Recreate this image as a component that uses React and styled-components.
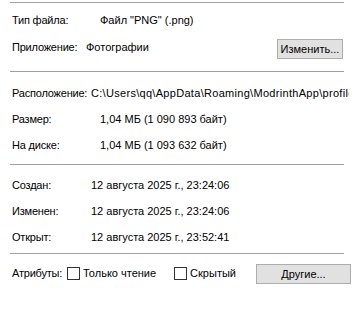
import React from 'react';
import styled, { createGlobalStyle } from 'styled-components';

const GlobalStyle = createGlobalStyle`
  body {
    margin: 0;
    background: #ffffff;
  }
`;

function App() {
  return (
    <>
      <GlobalStyle />
      <Page>
        <Separator />
        <Section $top={4} $bottom={10}>
          <Row>
            <Label $w={88}>Тип файла:</Label>
            <Value>Файл "PNG" (.png)</Value>
          </Row>
          <Row $h={28}>
            <Label $w={74}>Приложение:</Label>
            <Value>Фотографии</Value>
            <Button $w={66} $right={9}>Изменить...</Button>
          </Row>
        </Section>
        <Separator />
        <Section $top={8} $bottom={6}>
          <Row>
            <Label $w={79}>Расположение:</Label>
            <Value $spread>C:\Users\qq\AppData\Roaming\ModrinthApp\profiles</Value>
          </Row>
          <Row>
            <Label $w={88}>Размер:</Label>
            <Value>1,04 МБ (1 090 893 байт)</Value>
          </Row>
          <Row>
            <Label $w={88}>На диске:</Label>
            <Value>1,04 МБ (1 093 632 байт)</Value>
          </Row>
        </Section>
        <Separator />
        <Section $top={7} $bottom={3}>
          <Row>
            <Label $w={79}>Создан:</Label>
            <Value>12 августа 2025 г., 23:24:06</Value>
          </Row>
          <Row>
            <Label $w={79}>Изменен:</Label>
            <Value>12 августа 2025 г., 23:24:06</Value>
          </Row>
          <Row>
            <Label $w={79}>Открыт:</Label>
            <Value>12 августа 2025 г., 23:52:41</Value>
          </Row>
        </Section>
        <Separator />
        <Section $top={6} $bottom={0}>
          <Row>
            <Label $w={55}>Атрибуты:</Label>
            <Check>
              <Box />
              Только чтение
            </Check>
            <Check $gap={18}>
              <Box />
              Скрытый
            </Check>
            <Button $w={95} $left={20} $top={2}>Другие...</Button>
          </Row>
        </Section>
      </Page>
    </>
  );
}

// ========== Styled Components ==========

const Page = styled.div`
  width: 352px;
  height: 328px;
  overflow: hidden;
  box-sizing: border-box;
  padding-top: 2px;
  font-family: 'Liberation Sans', Arial, sans-serif;
  font-size: 11px;
  color: #000;
`;

const Separator = styled.div`
  height: 1px;
  margin: 0 8px 0 10px;
  background: #a0a0a0;
`;

const Section = styled.div`
  padding: ${(p) => p.$top}px 0 ${(p) => p.$bottom}px 12px;
`;

const Row = styled.div`
  display: flex;
  align-items: center;
  height: ${(p) => p.$h || 26}px;
  white-space: nowrap;
`;

const Label = styled.span`
  flex: none;
  width: ${(p) => p.$w}px;
  letter-spacing: -0.2px;
`;

const Value = styled.span`
  flex: 1;
  min-width: 0;
  overflow: hidden;
  margin-right: 3px;
  letter-spacing: ${(p) => (p.$spread ? '0.3px' : '0')};
`;

const Button = styled.button`
  flex: none;
  width: ${(p) => p.$w}px;
  height: 20px;
  margin: ${(p) => (p.$top === undefined ? 4 : p.$top)}px ${(p) => p.$right || 2}px 0
    ${(p) => p.$left || 0}px;
  padding: 0;
  background: #e1e1e1;
  border: 1px solid #adadad;
  border-radius: 0;
  font-family: inherit;
  font-size: 11px;
  color: #000;
`;

const Check = styled.label`
  display: flex;
  align-items: center;
  gap: 3px;
  margin-left: ${(p) => p.$gap || 0}px;
`;

const Box = styled.span`
  width: 11px;
  height: 11px;
  border: 1px solid #333;
  background: #fff;
`;

export default App;
